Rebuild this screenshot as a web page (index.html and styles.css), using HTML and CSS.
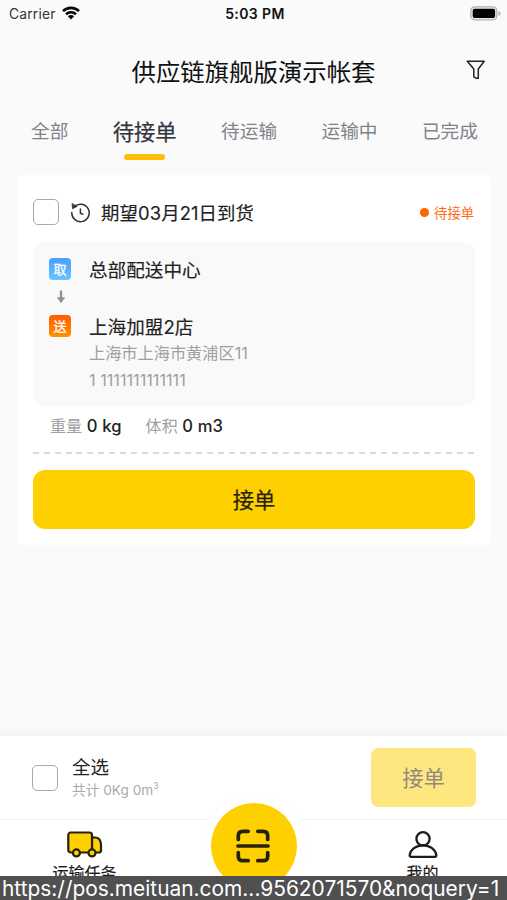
FILE: index.html
```html
<!DOCTYPE html>
<html lang="zh-CN">
<head>
<meta charset="utf-8">
<title>供应链旗舰版演示帐套</title>
<link rel="stylesheet" href="styles.css">
</head>
<body>
<div class="app">
  <header class="status-bar">
    <div class="carrier"><span>Carrier</span>
      <svg width="18" height="14" viewBox="0 0 18 14" fill="none" stroke="#080808" stroke-width="2.6"><path d="M1 5.1C5.4.8 12.6.8 17 5.1M4 8.2c2.8-2.7 7.2-2.7 10 0"/><path d="M5.9 10.2c1.700-1.600 4.500-1.600 6.200 0L9 13.400z" fill="#080808" stroke="none"/></svg>
    </div>
    <time class="clock">5:03 PM</time>
    <div class="battery">
      <svg width="31" height="15" viewBox="0 0 31 15"><rect x=".8" y=".8" width="26" height="13" rx="4" fill="#e8e8e8" stroke="#b2b2b2" stroke-width="1.3"/><rect x="2.7" y="2.7" width="22.4" height="9.2" rx="2" fill="#000"/><path d="M28.5 5v5q2-.7 2-2.500t-2-2.500z" fill="#aaa"/></svg>
    </div>
  </header>
  <div class="title-bar">
    <h1>供应链旗舰版演示帐套</h1>
    <svg class="filter" width="20" height="20" viewBox="0 0 20 20" fill="none" stroke="#222" stroke-width="1.5" stroke-linejoin="round"><path d="M1.300 1.200H18.200L12.300 9v9.200H10L7.800 16.800V9z"/></svg>
  </div>
  <nav class="tabs">
    <a>全部</a><a class="active">待接单</a><a>待运输</a><a>运输中</a><a>已完成</a>
  </nav>
  <main class="card">
    <div class="card-head">
      <span class="checkbox"></span>
      <svg class="history" width="21" height="20" viewBox="0 0 21 20" fill="none" stroke="#333" stroke-width="1.5" stroke-linecap="round"><path d="M4.300 3.800A8.700 8.700 0 1 1 1.800 9.500M10.400 6v4.300l2.400 1"/><path d="M2.100.8l.5 5 4.300-2.300z" fill="#333" stroke="#333" stroke-width=".8"/></svg>
      <span class="due">期望03月21日到货</span>
      <span class="state"><i class="dot"></i>待接单</span>
    </div>
    <section class="route">
      <div class="stop"><span class="tag pick">取</span><span class="place">总部配送中心</span></div>
      <div class="arrow"><svg width="10" height="14" viewBox="0 0 10 14" fill="none" stroke="#929292" stroke-width="2.4"><path d="M5 .5v9"/><path d="M.8 7.300h8.400L5 13.200z" fill="#929292" stroke="none"/></svg></div>
      <div class="stop"><span class="tag drop">送</span><span class="place">上海加盟2店</span></div>
      <p class="address">上海市上海市黄浦区11</p>
      <p class="contact">1 1111111111111</p>
    </section>
    <div class="metrics">
      <span class="weight">重量 <b>0 kg</b></span>
      <span class="volume">体积 <b>0 m3</b></span>
    </div>
    <div class="divider"></div>
    <button class="accept">接单</button>
  </main>
  <div class="batch">
    <span class="checkbox"></span>
    <div class="summary"><div class="all">全选</div><div class="total">共计 0Kg 0m<sup>3</sup></div></div>
    <button class="accept-all">接单</button>
  </div>
  <footer class="nav">
    <div class="nav-item">
      <svg width="36" height="28" viewBox="0 0 36 28" fill="#ffd000" stroke="#24220e" stroke-width="2.2" stroke-linejoin="round"><path d="M25 6.500h3.500q5.500.5 5.500 8v5q0 2-2 2h-7z"/><rect x="1.300" y="1.500" width="23.700" height="20" rx="2.500"/><circle cx="9.400" cy="21.900" r="3.500"/><circle cx="25" cy="21.900" r="3.500"/></svg>
      <span>运输任务</span>
    </div>
    <div class="scan">
      <svg width="34" height="34" viewBox="0 0 34 34" fill="none" stroke="#24220e" stroke-width="3.700" stroke-linecap="round"><path d="M2.300 10.500V6.800q0-4.500 4.500-4.500h5.400M21.800 2.300h5.400q4.500 0 4.500 4.500v3.700M2.300 23.500v3.700q0 4.500 4.500 4.500h5.400M21.800 31.700h5.400q4.500 0 4.500-4.500v-3.700M2 17h30"/></svg>
    </div>
    <div class="nav-item">
      <svg width="30" height="28" viewBox="0 0 30 28" fill="none" stroke="#1c1c1c" stroke-width="2.300" stroke-linejoin="round"><circle cx="15" cy="7.800" r="6.600"/><path d="M15 14.400C8 14.400 2.300 18.500 1.700 24.300q0 1.500 1.500 1.500h23.600q1.500 0 1.500-1.500C27.700 18.500 22 14.400 15 14.400z"/></svg>
      <span>我的</span>
    </div>
  </footer>
  <div class="url">https://pos.meituan.com...9562071570&amp;noquery=1</div>
</div>
</body>
</html>
```

FILE: styles.css
```css
* { box-sizing: border-box; }
body { margin: 0; }
.app {
  position: relative;
  display: flex;
  flex-direction: column;
  width: 507px;
  height: 900px;
  overflow: hidden;
  background: #fafafa;
  color: #222;
  font-family: Inter, "Noto Sans CJK SC", sans-serif;
}
svg { display: block; flex: none; }
h1, p { margin: 0; font-weight: 400; }
button { border: 0; padding: 0; font-family: inherit; }

.status-bar { display: grid; grid-template-columns: 1fr auto 1fr; height: 28px; align-items: center; padding: 0 6px 1px 9px; }
.carrier { display: flex; align-items: center; gap: 6px; font-size: 13.800px; letter-spacing: .2px; color: #333; }
.carrier svg { margin-bottom: 2px; }
.clock { font-size: 14px; font-weight: 600; letter-spacing: .4px; color: #111; }
.battery { justify-self: end; margin-bottom: 1px; }

.title-bar { display: grid; grid-template-columns: 1fr auto 1fr; align-items: center; height: 88px; }
h1 { grid-column: 2; font-size: 24.400px; line-height: 36px; color: #111; }
.filter { justify-self: end; margin-right: 21px; margin-bottom: 4px; }

.tabs { display: flex; justify-content: space-between; height: 59px; padding: 1px 29px 0 31px; font-size: 18.700px; line-height: 30px; color: #80838a; }
.tabs .active { display: flex; flex-direction: column; align-items: center; font-size: 21.300px; color: #33363e; -webkit-text-stroke: .25px; }
.tabs .active::after { content: ""; width: 41px; height: 6px; margin-top: 7px; border-radius: 3px; background: #ffbc09; }

.card { width: 473px; height: 370px; margin-left: 18px; padding: 0 16px 17px 15px; border-radius: 4px; background: #fff; }
.card-head { display: flex; align-items: center; height: 67px; padding-top: 8px; }
.checkbox { flex: none; width: 26px; height: 26px; border: 1.500px solid #aaa; border-radius: 5px; background: #fff; }
.card-head .checkbox { margin-bottom: 1px; }
.history { margin-left: 11px; }
.due { margin: 0 0 1px 10px; font-size: 18.400px; letter-spacing: .1px; -webkit-text-stroke: .15px; }
.state { display: flex; align-items: center; gap: 5px; margin-left: auto; padding-right: 1px; font-size: 13.300px; color: #ff6a13; }
.dot { width: 9px; height: 9px; border-radius: 50%; background: #ff6200; }

.route { height: 164px; padding: 15px 16px 0; border-radius: 10px; background: #f9f9f9; }
.stop { display: flex; align-items: center; height: 24px; gap: 18px; }
.tag { display: grid; place-items: center; width: 22px; height: 22px; border-radius: 4px; font-size: 13px; line-height: 20px; color: #fff; -webkit-text-stroke: .3px; }
.pick { background: linear-gradient(#459fff, #6bc4ff); }
.drop { background: linear-gradient(#ff5c00, #ff9200); }
.place { padding-top: 1px; font-size: 18.600px; line-height: 24px; -webkit-text-stroke: .15px; }
.arrow { display: flex; align-items: center; height: 33px; padding: 0 0 1px 7px; }
.address, .contact { margin-left: 40px; font-size: 16.200px; line-height: 27px; color: #a0a0a0; }
.address { margin-top: 2px; }

.metrics { display: flex; gap: 24px; align-items: center; height: 38px; padding: 0 0 1px 17px; font-size: 16px; letter-spacing: .1px; color: #a0a0a0; }
.metrics b { font-size: 16.600px; font-weight: 450; color: #222; }
.divider { height: 2px; margin: 8px 0 16px; background: repeating-linear-gradient(90deg, #d9d9d9 0 6px, transparent 6px 10.870px); }
.accept { display: block; width: 442px; height: 59px; padding-bottom: 2px; border-radius: 12px; background: #ffd000; font-size: 21.300px; color: #26230a; -webkit-text-stroke: .25px; }

.batch { display: flex; align-items: center; height: 83px; margin-top: auto; padding: 0 31px 0 32px; background: #fff; box-shadow: 0 -2px 12px rgba(0, 0, 0, .05); }
.summary { margin-left: 14px; }
.all { font-size: 18.500px; line-height: 24px; }
.total { font-size: 13.600px; line-height: 22px; letter-spacing: .05px; color: #aaa; }
.total sup { font-size: 8.500px; line-height: 0; }
.accept-all { width: 105px; height: 59px; margin-left: auto; padding-bottom: 2px; border-radius: 7px; background: #ffe77f; font-size: 21.300px; color: #8f8b80; }

.nav { display: flex; flex: none; justify-content: space-between; height: 81px; background: #fff; border-top: 1px solid #f4f4f4; }
.nav-item { display: flex; flex-direction: column; align-items: center; width: 169px; padding-top: 11px; font-size: 16px; line-height: 20px; color: #1c1c1c; -webkit-text-stroke: .2px; }
.nav-item span { margin-top: 4px; }
.scan { display: grid; place-items: center; flex: none; width: 86px; height: 86px; margin-top: -17px; padding: 0 1px 1px 0; border-radius: 50%; background: #ffd000; box-shadow: 0 0 0 9px #fff, 0 0 0 10px #fbfbfb; }
.url { position: absolute; inset: auto 0 0; height: 24px; padding-left: 2px; background: #505050; color: #fff; font-size: 20.900px; line-height: 25px; white-space: nowrap; }
```
